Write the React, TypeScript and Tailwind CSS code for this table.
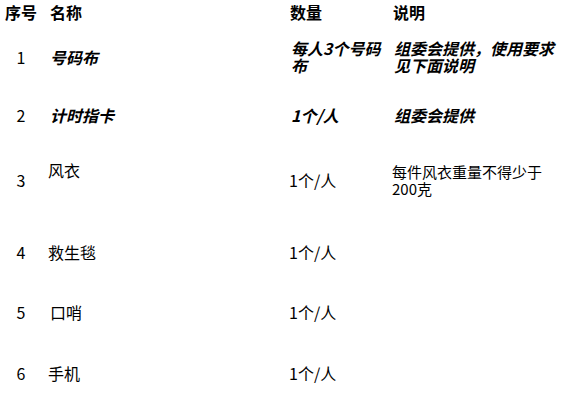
import React from "react";

const font = { fontFamily: '"Noto Sans CJK SC", "Noto Sans", sans-serif' };

export default function App() {
  return (
    <div className="w-[586px] h-[405px] overflow-hidden bg-white text-black text-[16px] leading-[17px]" style={font}>
      {/* header */}
      <div className="flex h-[25px] items-center font-bold">
        <div className="w-[42px] text-center">序号</div>
        <div className="w-[246px] pl-[8px]">名称</div>
        <div className="w-[103px] pl-[2px]">数量</div>
        <div className="flex-1 pl-[2px]">说明</div>
      </div>
      {/* row 1 */}
      <div className="flex h-[64px] items-center">
        <div className="w-[42px] text-center">1</div>
        <div className="w-[246px] pl-[8px] font-bold italic">号码布</div>
        <div className="w-[103px] pl-[3px] pr-[4px] font-bold italic">每人3个号码布</div>
        <div className="flex-1 pl-[3px] pr-[20px] font-bold italic">组委会提供，使用要求见下面说明</div>
      </div>
      {/* row 2 */}
      <div className="flex h-[52px] items-center">
        <div className="w-[42px] text-center">2</div>
        <div className="w-[246px] pl-[8px] font-bold italic">计时指卡</div>
        <div className="w-[103px] pl-[3px] font-bold italic">1个/人</div>
        <div className="flex-1 pl-[3px] font-bold italic">组委会提供</div>
      </div>
      {/* row 3 */}
      <div className="flex h-[78px] items-center">
        <div className="w-[42px] text-center">3</div>
        <div className="w-[246px] pl-[6px] self-start pt-[21px]">风衣</div>
        <div className="w-[103px] pl-[1px]">1个/人</div>
        <div className="flex-1 pl-[1px] pr-[30px] text-[15px]">每件风衣重量不得少于200克</div>
      </div>
      {/* row 4 */}
      <div className="flex h-[66px] items-center">
        <div className="w-[42px] text-center">4</div>
        <div className="w-[246px] pl-[6px]">救生毯</div>
        <div className="w-[103px] pl-[1px]">1个/人</div>
        <div className="flex-1" />
      </div>
      {/* row 5 */}
      <div className="flex h-[54px] items-center">
        <div className="w-[42px] text-center">5</div>
        <div className="w-[246px] pl-[8px]">口哨</div>
        <div className="w-[103px] pl-[1px]">1个/人</div>
        <div className="flex-1" />
      </div>
      {/* row 6 */}
      <div className="flex h-[68px] items-center">
        <div className="w-[42px] text-center">6</div>
        <div className="w-[246px] pl-[6px]">手机</div>
        <div className="w-[103px] pl-[1px]">1个/人</div>
        <div className="flex-1" />
      </div>
    </div>
  );
}
